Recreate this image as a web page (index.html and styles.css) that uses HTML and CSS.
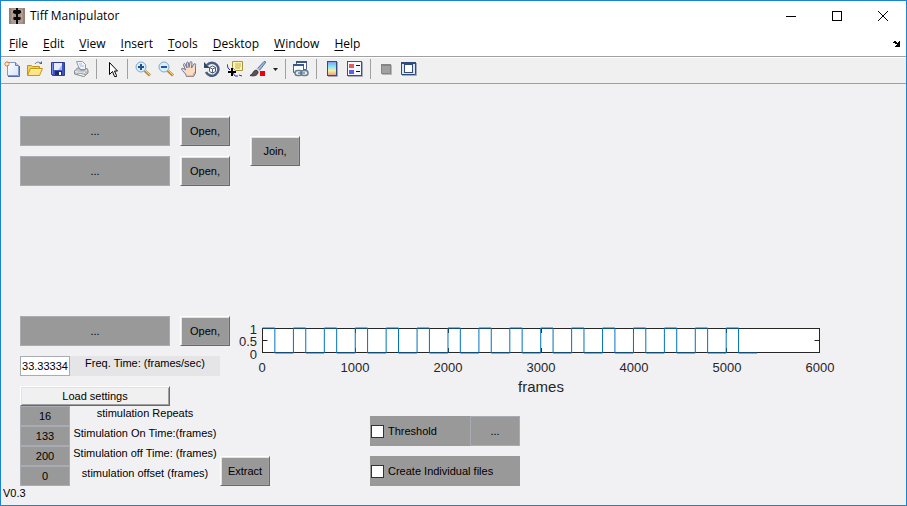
FILE: index.html
```html
<!DOCTYPE html>
<html lang="en">
<head>
<meta charset="utf-8">
<title>Tiff Manipulator</title>
<link rel="stylesheet" href="styles.css">
</head>
<body>
<header class="titlebar">
  <svg class="app-icon" viewBox="0 0 16 16" aria-hidden="true">
    <rect width="16" height="16" fill="#a59388"/>
    <g fill="none" stroke="#c4aaa1"><circle cx="8" cy="8" r="4.500"/><circle cx="8" cy="8" r="7"/></g>
    <path d="M0 0h2v16H0zM14 0h2v16h-2z" fill="#84756c" opacity=".6"/>
    <path d="M7 0h2v2h2l1 1v2l-2 1H9v3h2l1 1-1 2H9v4H7v-4H5l-1-2 1-1h2V6H6L4 5V3l1-1h2z" fill="#090909"/>
  </svg>
  <h1 class="title">Tiff Manipulator</h1>
  <div class="window-controls">
    <button type="button" aria-label="Minimize"><svg viewBox="0 0 12 12"><path d="M1 6.500h10" stroke="#000"/></svg></button>
    <button type="button" aria-label="Maximize"><svg viewBox="0 0 12 12"><rect x="1.500" y="1.500" width="9" height="9" fill="none" stroke="#000"/></svg></button>
    <button type="button" aria-label="Close"><svg viewBox="0 0 12 12"><path d="M1 1l10 10M11 1L1 11" stroke="#000" fill="none"/></svg></button>
  </div>
</header>
<nav class="menubar">
  <button type="button"><u>F</u>ile</button>
  <button type="button"><u>E</u>dit</button>
  <button type="button"><u>V</u>iew</button>
  <button type="button"><u>I</u>nsert</button>
  <button type="button"><u>T</u>ools</button>
  <button type="button"><u>D</u>esktop</button>
  <button type="button"><u>W</u>indow</button>
  <button type="button"><u>H</u>elp</button>
  <button type="button" class="dock" aria-label="Dock figure"><svg viewBox="0 0 8 6"><path d="M1 0h2v1h1v1h1V1h1V0h1v6H2V5h1V4h1V3H2V2H0V1h1z" fill="#000"/></svg></button>
</nav>
<div class="toolbar" role="toolbar" aria-label="Figure toolbar">
  <button type="button" aria-label="New figure"><svg viewBox="0 0 16 16">
    <defs><linearGradient id="page" x1="0" y1="0" x2="1" y2="1"><stop offset="0" stop-color="#fff"/><stop offset="1" stop-color="#d3e3fa"/></linearGradient></defs>
    <path d="M3.500 1.500h8l3 3v10h-11z" fill="url(#page)" stroke="#8498c5"/><path d="M15.500 5v10.500H4" fill="none" stroke="#53699d"/><path d="M11.500 1.500v3h3" fill="#b9cce9" stroke="#6980b3"/>
    <path d="M3 0v6M0 3h6M1 1l4 4M5 1L1 5" stroke="#df8046"/><rect x="2" y="2" width="2" height="2" fill="#fff0c0"/>
  </svg></button>
  <button type="button" aria-label="Open file"><svg viewBox="0 0 16 16">
    <path d="M8 3c2-3 5-2 6 0" fill="none" stroke="#58789a"/><path d="M12 3h3V0z" fill="#46698e"/>
    <path d="M.5 14.500v-10h4l1 1h7v3" fill="#f4cf54" stroke="#c09417"/><path d="M.5 14.500l3-7h12l-3 7z" fill="#ffe588" stroke="#c69812"/><path d="M4 8.500h10" stroke="#fff5bd"/>
  </svg></button>
  <button type="button" aria-label="Save figure"><svg viewBox="0 0 16 16">
    <path d="M1.500 1.500h13v13h-12l-1-1z" fill="#4054bd" stroke="#2c3c97"/><path d="M4 2h8v7H4z" fill="#e6edfa"/><path d="M8 9l4-5v5z" fill="#a9bee6"/><path d="M5 10h7v4H5z" fill="#202b69"/><path d="M9 11h2v3H9z" fill="#fff"/><path d="M2.500 2v11" stroke="#778bea"/>
  </svg></button>
  <button type="button" aria-label="Print figure"><svg viewBox="0 0 16 16">
    <path d="M3.500.5h6l3 3v5h-6z" fill="#eef4ff" stroke="#899bb6"/><path d="M6 3h3M7 5h4" stroke="#a9bbd3"/>
    <path d="M1.500 10l3-3h2l1 2h4l2-2 1.500 2v3l-4 3.500-9.500-2.500z" fill="#c4c8cd" stroke="#84898f"/><path d="M2 10.500l8 2 4-3" fill="none" stroke="#f3f4f6"/><path d="M5 12l5 1 3 1-2 1.500-7-2z" fill="#fff" stroke="#999"/><path d="M12 11h1.500" stroke="#d19b38"/>
  </svg></button>
  <span class="separator"></span>
  <button type="button" aria-label="Edit plot"><svg viewBox="0 0 16 16">
    <path d="M5.500 1.500v12l3-3 2 5h2v-1l-2-4.500h3z" fill="#fff" stroke="#000"/>
  </svg></button>
  <span class="separator"></span>
  <button type="button" aria-label="Zoom in"><svg viewBox="0 0 16 16">
    <path d="M9.500 9.500l5.500 5" stroke="#b98c45" stroke-width="3"/><path d="M10 9l5 5" stroke="#f4cf85"/><circle cx="6" cy="6" r="5" fill="#d7effa" stroke="#80abc9"/><path d="M3 6h6M6 3v6" stroke="#234f9a" stroke-width="2"/>
  </svg></button>
  <button type="button" aria-label="Zoom out"><svg viewBox="0 0 16 16">
    <path d="M9.500 9.500l5.500 5" stroke="#b98c45" stroke-width="3"/><path d="M10 9l5 5" stroke="#f4cf85"/><circle cx="6" cy="6" r="5" fill="#d7effa" stroke="#80abc9"/><path d="M3 6h6" stroke="#28559c" stroke-width="2"/>
  </svg></button>
  <button type="button" aria-label="Pan"><svg viewBox="0 0 16 16">
    <path d="M5.500 15.500C5 12 1 10 .5 8c0-1 2-1 4 1L2.500 4c0-2 1.500-2 2 0L6 7 5.500 2c.5-1.500 2-1 2 0L8 6.500 9 1.500c.5-1.500 2-1 2 .5l-.5 5L13 3c1-1 2 0 1.500 1.500L14.500 9v3l-2 3.500z" fill="#fbdcbf" stroke="#6675a3"/><path d="M6 15h6l1.500-4" fill="none" stroke="#d69d75"/>
  </svg></button>
  <button type="button" aria-label="Rotate 3D"><svg viewBox="0 0 16 16">
    <path d="M3 4a6.500 6.500 0 1 1-1 7" fill="none" stroke="#485d7f" stroke-width="2.500"/><path d="M0 1v6h6z" fill="#314766"/><path d="M5.500 6.500l3-1.500 3 1.500v4l-3 1.500-3-1.500z" fill="#fff" stroke="#485d7c"/><path d="M5.500 6.500l3 1.500 3-1.500M8.500 8v4" fill="none" stroke="#485d7c"/>
  </svg></button>
  <button type="button" aria-label="Data cursor"><svg viewBox="0 0 16 16">
    <path d="M5.500.5h10v9h-7l-3-3z" fill="#fff6a9" stroke="#a39642"/><path d="M8 3h6M8 5h6M8 7h5" stroke="#bbae62"/>
    <path d="M0 3l1 4 2 2M6 12l2 3h3M12 14l3 1" fill="none" stroke="#292ce0"/><path d="M1 11h8M5 7v8" stroke="#000" stroke-width="2"/>
  </svg></button>
  <button type="button" aria-label="Brush data"><svg viewBox="0 0 16 16">
    <path d="M7 8l7-7.500 2 .5-7 9z" fill="#9eb8e4" stroke="#576d9f"/><path d="M6 8l3 3" stroke="#d8d8d8" stroke-width="3"/><path d="M7 9.500c-4-1-3 3-7 5 4 1 8 0 8-3.500z" fill="#595357" stroke="#39343a"/><rect x="10" y="10" width="5" height="5" fill="#f00006"/>
  </svg></button>
  <button type="button" class="drop" aria-label="Brush options"><svg viewBox="0 0 5 3"><path d="M0 0h5L2.500 3z" fill="#222"/></svg></button>
  <span class="separator"></span>
  <button type="button" aria-label="Link plot"><svg viewBox="0 0 16 16">
    <path d="M3.500.5h10v8h-10z" fill="#fff" stroke="#466396"/><path d="M3 1h11" stroke="#3a568a" stroke-width="2"/><path d="M.5 3.500h10v8H.5z" fill="#f8fbff" stroke="#466396"/><path d="M0 4h11" stroke="#3a568a" stroke-width="2"/>
    <rect x="2" y="9.500" width="7" height="5" rx="2.500" fill="#e5edf2" stroke="#657e92" stroke-width="1.500"/><rect x="8" y="9.500" width="7" height="5" rx="2.500" fill="#e5edf2" stroke="#657e92" stroke-width="1.500"/><path d="M5 12h7" stroke="#435f75"/>
  </svg></button>
  <span class="separator"></span>
  <button type="button" aria-label="Insert colorbar"><svg viewBox="0 0 16 16">
    <defs><linearGradient id="spectrum" x1="0" y1="0" x2="0" y2="1"><stop offset="0" stop-color="#8a96f3"/><stop offset=".35" stop-color="#83e5f5"/><stop offset=".65" stop-color="#f4f0a0"/><stop offset="1" stop-color="#ef9a8c"/></linearGradient></defs>
    <rect x="3.500" y=".5" width="9" height="14" fill="url(#spectrum)" stroke="#354d7d"/><path d="M13.500 1v14.500H4" fill="none" stroke="#a5abb8"/>
  </svg></button>
  <button type="button" aria-label="Insert legend"><svg viewBox="0 0 16 16">
    <rect x=".5" y=".5" width="14" height="14" fill="#f5f8ff" stroke="#405180"/><path d="M15.500 1v14.500H1" fill="none" stroke="#a5abb8"/><path d="M2 3h5v4H2z" fill="#e75a5c"/><path d="M2 9h5v4H2z" fill="#625de2"/><path d="M9 4.500h4M9 10.500h4" stroke="#111"/>
  </svg></button>
  <span class="separator"></span>
  <button type="button" aria-label="Hide plot tools"><svg viewBox="0 0 16 16">
    <path d="M4 4h10v10H4z" fill="#b8b8b8"/><path d="M3.500 3.500h9v9h-9z" fill="#a0a0a0" stroke="#858585"/><path d="M3 4h10" stroke="#858585" stroke-width="2"/>
  </svg></button>
  <button type="button" aria-label="Show plot tools"><svg viewBox="0 0 16 16">
    <path d="M.5 1.500h14v12H.5z" fill="#dbe5f3" stroke="#304b7d"/><path d="M0 2h15" stroke="#304b7d" stroke-width="2"/><rect x="3.500" y="3.500" width="8" height="8" fill="#fff" stroke="#304b7d"/><path d="M15.500 2v12.500H1" fill="none" stroke="#a5abb8"/>
  </svg></button>
</div>
<main class="figure">
  <section class="join-files">
    <div class="file-list">
      <div class="file-row"><input class="field" type="text" value="..." aria-label="First file"><button type="button" class="push">Open,</button></div>
      <div class="file-row"><input class="field" type="text" value="..." aria-label="Second file"><button type="button" class="push">Open,</button></div>
    </div>
    <button type="button" class="push">Join,</button>
  </section>
  <section class="signal">
    <div class="signal-form">
      <div class="file-row"><input class="field" type="text" value="..." aria-label="Signal file"><button type="button" class="push">Open,</button></div>
      <div class="setting frequency"><input class="field white" id="freq" type="text" value="33.33334"><label for="freq">Freq. Time: (frames/sec)</label></div>
      <button type="button" class="push load">Load settings</button>
    </div>
    <svg class="chart" viewBox="0 0 657 90" role="img" aria-label="Stimulation signal by frames">
      <rect x="32.500" y="12.500" width="557" height="24" fill="#fff" stroke="#262626"/>
      <path d="M32.500 24.500h5M589.500 24.500h-5M125.500 12v5M125.500 37v-5M218.500 12v5M218.500 37v-5M311.500 12v5M311.500 37v-5M403.500 12v5M403.500 37v-5M496.500 12v5M496.500 37v-5" stroke="#262626"/>
      <path class="wave" id="wave"/>
      <g class="ticks" text-anchor="end"><text x="27" y="18">1</text><text x="27" y="30">0.5</text><text x="27" y="43">0</text></g>
      <g class="ticks" text-anchor="middle"><text x="32" y="56">0</text><text x="125" y="56">1000</text><text x="218" y="56">2000</text><text x="311" y="56">3000</text><text x="404" y="56">4000</text><text x="497" y="56">5000</text><text x="590" y="56">6000</text></g>
      <text class="axis-label" x="311" y="76" text-anchor="middle">frames</text>
    </svg>
  </section>
  <section class="stimulation">
    <div class="settings">
      <div class="setting"><input class="field" id="repeats" type="text" value="16"><label for="repeats">stimulation Repeats</label></div>
      <div class="setting"><input class="field" id="on" type="text" value="133"><label for="on">Stimulation On Time:(frames)</label></div>
      <div class="setting"><input class="field" id="off" type="text" value="200"><label for="off">Stimulation off Time: (frames)</label></div>
      <div class="setting"><input class="field" id="offset" type="text" value="0"><label for="offset">stimulation offset (frames)</label></div>
    </div>
    <button type="button" class="push">Extract</button>
    <div class="options">
      <div class="option"><label><input type="checkbox">Threshold</label><input class="field" type="text" value="..." aria-label="Threshold value"></div>
      <div class="option"><label><input type="checkbox">Create Individual files</label></div>
    </div>
  </section>
  <footer class="version">V0.3</footer>
</main>
<script src="chart.js"></script>
</body>
</html>
```
FILE: styles.css
```css
* { box-sizing: border-box; }
body {
  margin: 0;
  min-height: 100vh;
  border: 1px solid #1883d7;
  background: #f1f1f4;
  color: #000;
  font: 11px/14px "Liberation Sans", Arial, sans-serif;
}
button, input { font: inherit; color: inherit; margin: 0; }
.titlebar { display: flex; align-items: center; height: 30px; padding-left: 8px; gap: 5px; background: #fff; }
.app-icon { width: 16px; height: 16px; }
.title { margin: 0; font: 12px/16px "Open Sans", "Noto Sans", sans-serif; }
.window-controls { display: flex; margin-left: auto; }
.window-controls button { display: grid; place-items: center; width: 46px; height: 28px; padding: 0; border: 0; background: none; }
.window-controls svg { width: 12px; height: 12px; }
.menubar { display: flex; align-items: center; gap: 15px; height: 25px; padding: 0 5px 0 8px; background: #fff; font: 12px/16px "Open Sans", "Noto Sans", sans-serif; }
.menubar button { padding: 0; border: 0; background: none; }
.menubar u { text-underline-offset: 2px; }
.menubar .dock { margin-left: auto; }
.dock svg { display: block; width: 8px; height: 6px; }
.toolbar { display: flex; align-items: center; gap: 7px; height: 28px; padding: 0 0 2px 3px; border-top: 1px solid #a0a0a0; border-bottom: 1px solid #a0a0a0; background: #f0f0f0; box-shadow: inset 0 1px #fff; }
.toolbar button { width: 16px; height: 16px; padding: 0; border: 0; background: none; }
.toolbar svg { display: block; width: 16px; height: 16px; }
.toolbar .drop { width: 5px; height: 3px; }
.toolbar .drop svg { width: 5px; height: 3px; }
.separator { width: 1px; height: 20px; background: #a0a0a0; }
.figure { padding: 32px 19px 0; }
.join-files { display: flex; align-items: center; gap: 20px; margin-bottom: 130px; }
.file-list { display: grid; gap: 10px; }
.file-row { display: flex; gap: 10px; height: 30px; }
.field { width: 50px; min-width: 0; padding: 0; border: 1px solid #a9abb2; border-radius: 0; background: #999; text-align: center; }
.file-row .field { width: 150px; }
.field.white { background: #fff; }
.push { width: 50px; height: 30px; padding: 0; border: 1px solid; border-color: #fff #696969 #696969 #fff; background: #999; box-shadow: inset 1px 1px #e3e3e3, inset -1px -1px #a0a0a0; }
.push.load { width: 150px; height: 20px; background: #f0f0f0; }
.signal { display: flex; }
.signal-form { display: flex; flex-direction: column; gap: 10px; width: 210px; flex: none; }
.setting { display: flex; width: 200px; height: 20px; }
.setting label { flex: 1; text-align: center; }
.frequency { background: #e5e5e8; }
.chart { flex: 1; min-width: 0; height: auto; align-self: flex-start; font-family: "Liberation Sans", Arial, sans-serif; fill: #262626; }
.wave { fill: none; stroke: #0072bd; }
.ticks { font-size: 13px; }
.axis-label { font-size: 15px; }
.stimulation { display: flex; align-items: flex-end; }
.stimulation > .push { flex: none; }
.options { display: grid; gap: 10px; width: 150px; margin-left: 100px; }
.option { display: flex; height: 30px; background: #999; }
.option label { display: flex; flex: 1; align-items: center; gap: 4px; padding-left: 1px; }
.option input[type="checkbox"] { appearance: none; width: 13px; height: 13px; border: 1px solid #333; background: #fff; }
.version { margin-left: -17px; }
```
FILE: chart.js
```javascript
const repeats = 16;
const onFrames = 133;
const offFrames = 200;
const scale = 557 / 6000;
const left = 32.5;
let path = `M${left} 12`;
for (let i = 0; i < repeats; i++) {
  const start = i * (onFrames + offFrames);
  const fall = left + (start + onFrames) * scale;
  const end = left + (start + onFrames + offFrames) * scale;
  path += `H${fall}V37H${end}`;
  if (i < repeats - 1) path += "V12";
}
document.getElementById("wave").setAttribute("d", path);
```
